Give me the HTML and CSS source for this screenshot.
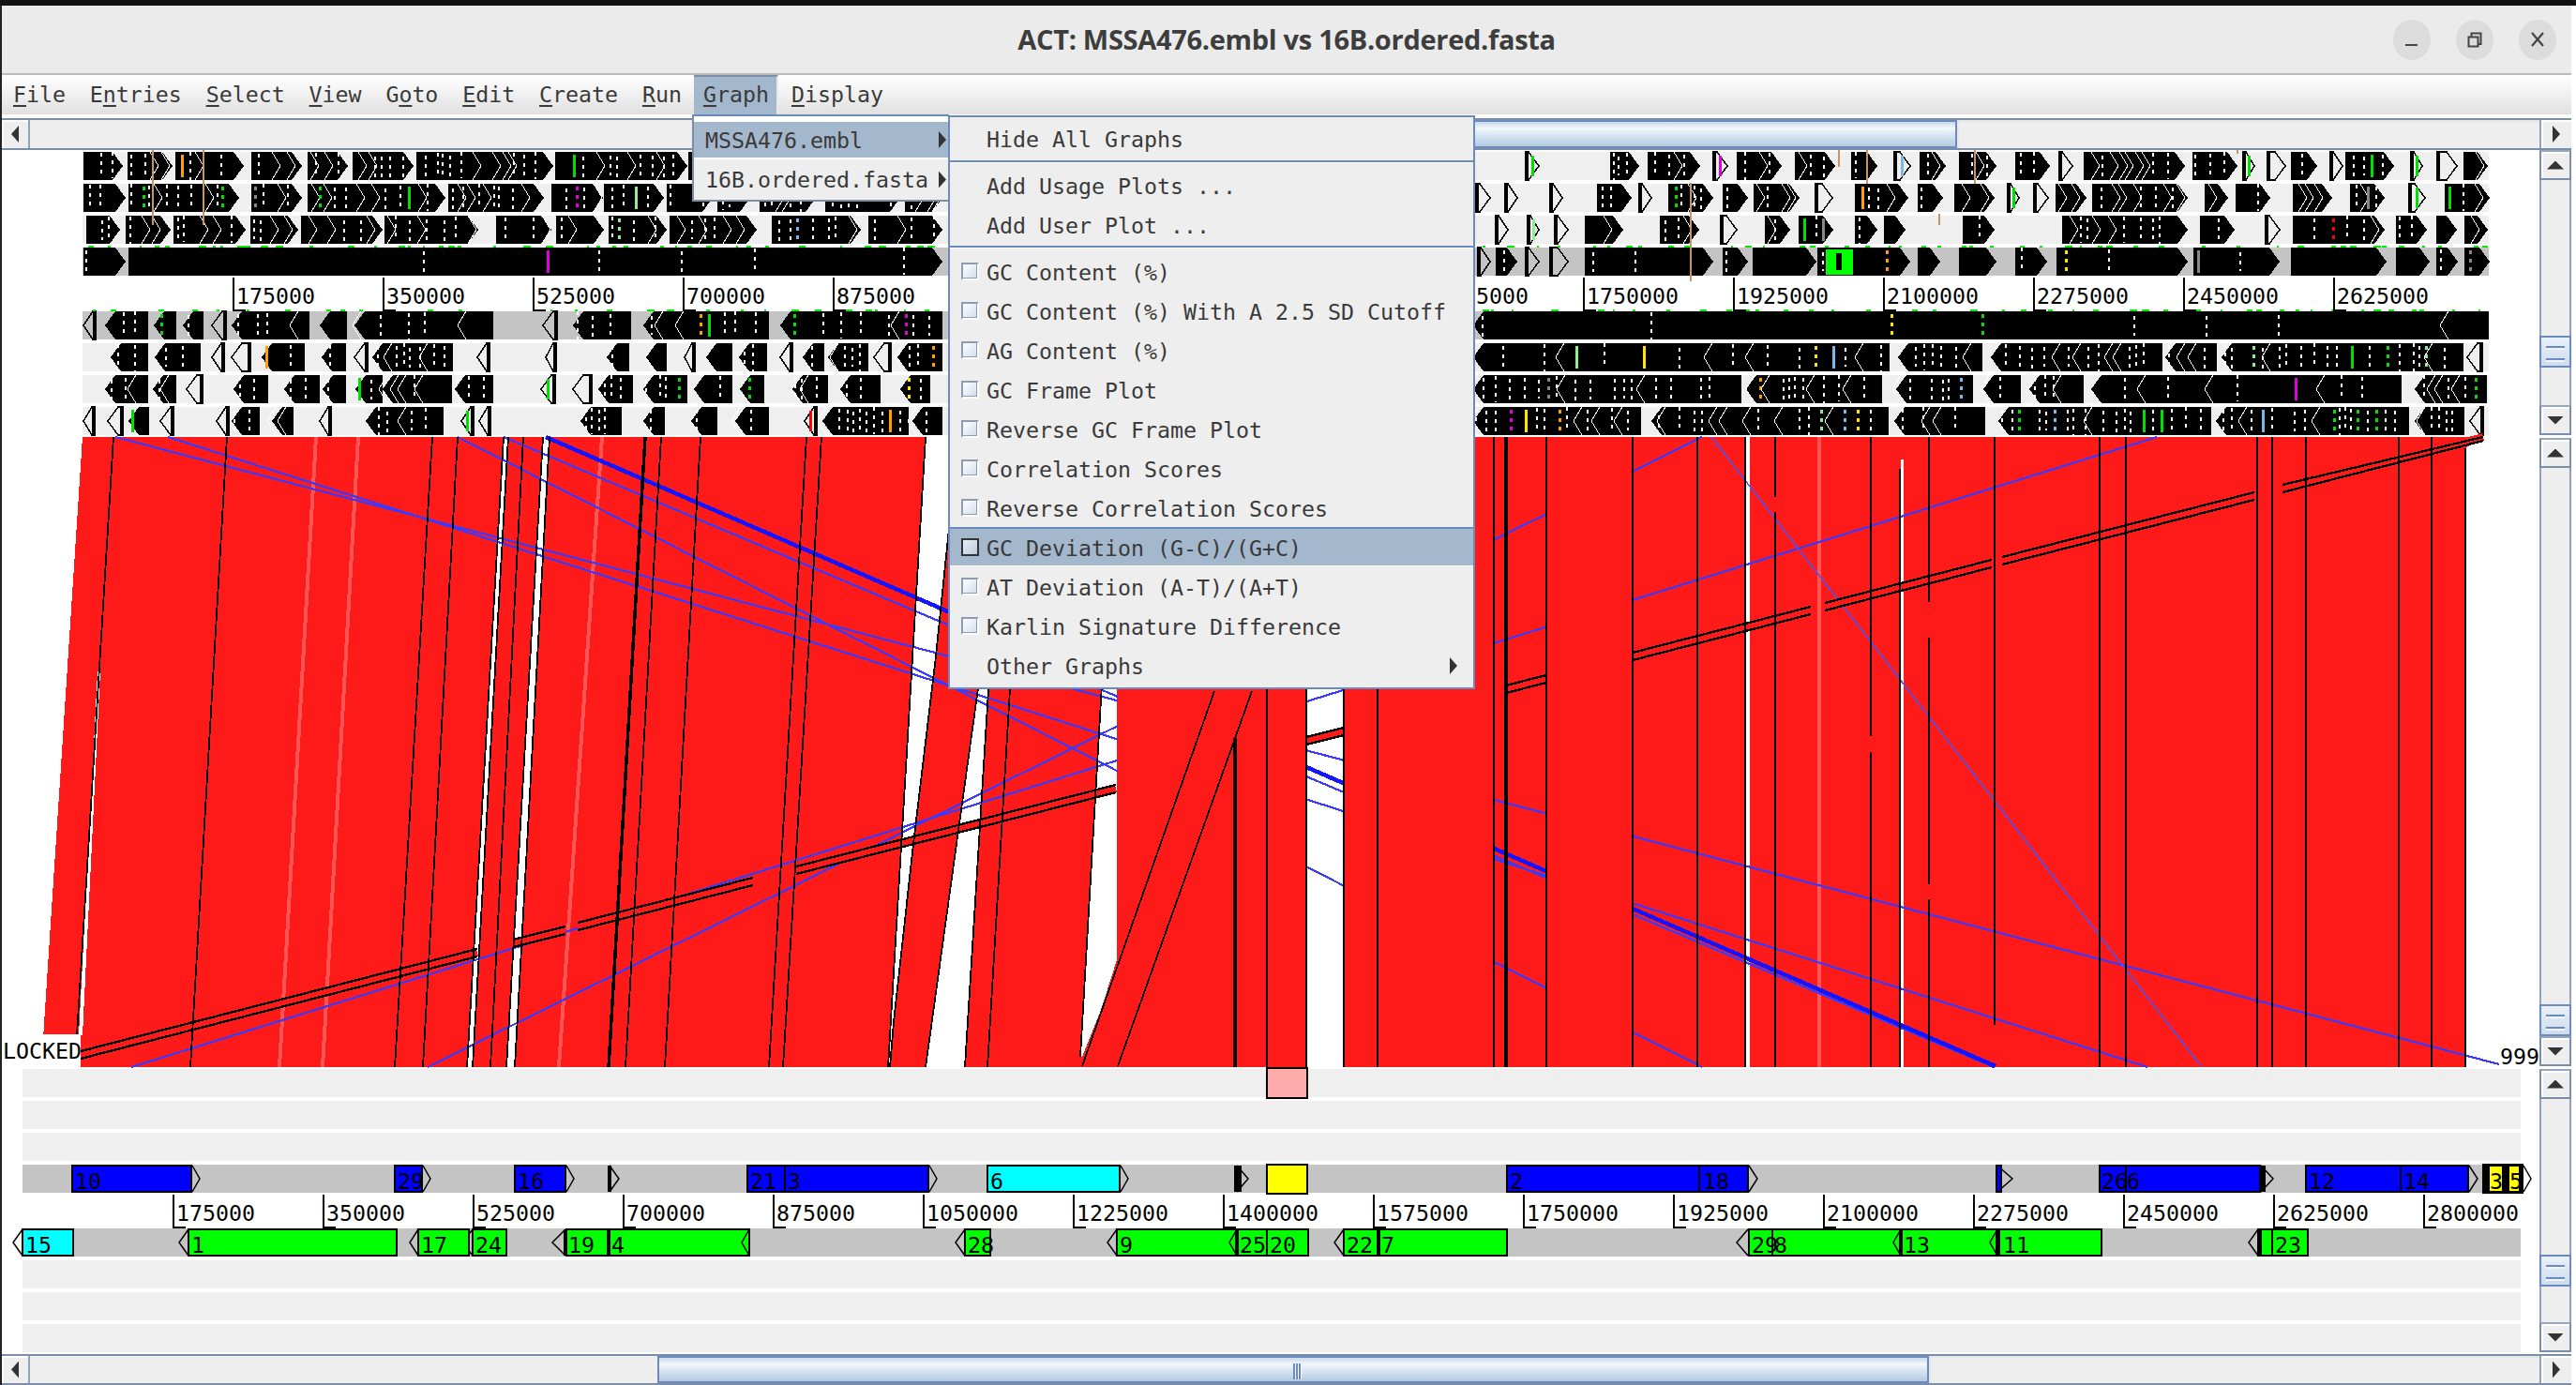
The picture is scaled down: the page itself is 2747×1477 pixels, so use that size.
FILE: index.html
```html
<!DOCTYPE html>
<html lang="en">
<head>
<meta charset="utf-8">
<title>ACT: MSSA476.embl vs 16B.ordered.fasta</title>
<link rel="stylesheet" href="styles.css">
</head>
<body>
<div class="strip"></div>
<div class="win">
  <header class="titlebar">
    <span></span>
    <h1 class="title">ACT: MSSA476.embl vs 16B.ordered.fasta</h1>
    <div class="controls">
      <button class="ctl"><svg viewBox="0 0 20 20" width="20" height="20"><path class="ctl-ink" d="M3 15h13v2H3z"/></svg></button>
      <button class="ctl"><svg viewBox="0 0 20 20" width="20" height="20"><path class="ctl-line" d="M3.500 7.500h10v10h-10zM6.500 7V3.500h10V15H14"/></svg></button>
      <button class="ctl"><svg viewBox="0 0 20 20" width="20" height="20"><path class="ctl-line2" d="M4 3l12 14M16 3L4 17"/></svg></button>
    </div>
  </header>

  <nav class="menubar">
    <span class="mi"><u>F</u>ile</span>
    <span class="mi">E<u>n</u>tries</span>
    <span class="mi"><u>S</u>elect</span>
    <span class="mi"><u>V</u>iew</span>
    <span class="mi">G<u>o</u>to</span>
    <span class="mi"><u>E</u>dit</span>
    <span class="mi"><u>C</u>reate</span>
    <span class="mi"><u>R</u>un</span>
    <span class="mi mi-on"><u>G</u>raph</span>
    <span class="mi"><u>D</u>isplay</span>
  </nav>

  <div class="hscroll hscroll-top">
    <div class="sbtn"><i class="tri tri-l"></i></div>
    <div class="track track-t1"></div>
    <div class="thumb thumb-t"></div>
    <div class="track track-fill"></div>
    <div class="sbtn sbtn-r"><i class="tri tri-r"></i></div>
  </div>

  <div class="content">
    <div class="canvas">
      <svg class="view" width="2706" height="306" viewBox="2 160 2706 306">
        <g class="rows">
          <rect class="row" x="88" y="162" width="2566" height="30"/>
          <rect class="row" x="88" y="196" width="2566" height="30"/>
          <rect class="row" x="88" y="230" width="2566" height="30"/>
          <rect class="row row-d" x="88" y="264" width="2566" height="30"/>
          <rect class="row row-d" x="88" y="332" width="2566" height="30"/>
          <rect class="row" x="88" y="366" width="2566" height="30"/>
          <rect class="row" x="88" y="400" width="2566" height="30"/>
          <rect class="row" x="88" y="434" width="2566" height="30"/>
        </g>
        <g id="genes"></g>
        <path class="tick" d="M249 296V331H262M409 296V331H422M569 296V331H582M729 296V331H742M889 296V331H902M1529 296V331H1542M1689 296V331H1702M1849 296V331H1862M2009 296V331H2022M2169 296V331H2182M2329 296V331H2342M2489 296V331H2502"/>
        <g class="num">
          <text x="252" y="324">175000</text>
          <text x="412" y="324">350000</text>
          <text x="572" y="324">525000</text>
          <text x="732" y="324">700000</text>
          <text x="892" y="324">875000</text>
          <text x="1532" y="324">1575000</text>
          <text x="1692" y="324">1750000</text>
          <text x="1852" y="324">1925000</text>
          <text x="2012" y="324">2100000</text>
          <text x="2172" y="324">2275000</text>
          <text x="2332" y="324">2450000</text>
          <text x="2492" y="324">2625000</text>
        </g>
      </svg>

      <svg class="view view-cmp" width="2706" height="672" viewBox="2 466 2706 672">
        <polygon class="red" points="88,466 2648,466 2629,478 2629,1138 44,1138"/>
        <g class="gap">
          <polygon points="104,716 107,716 88,1104 84,1104"/>
          <polygon points="537,466 542,466 504,1138 498,1138"/>
          <polygon points="579,466 586,466 549,1138 540,1138"/>
          <polygon points="987,466 1022,466 998,700 974,900 953,1090 949,1138 947,1138"/>
          <polygon points="1056,640 1060,640 1029,1138 987,1138"/>
          <polygon points="1190,470 1191,470 1191,1023 1188,1033 1174,1077 1154,1127 1152,1127"/>
          <rect x="1393" y="466" width="40" height="672"/>
          <rect x="1862" y="466" width="4" height="672"/>
          <rect x="2027" y="490" width="3" height="648"/>
        </g>
        <g class="pale">
          <path d="M337 466L298 1138M382 466L344 1138M642 466L596 1138M1940 466V1138"/>
        </g>

        <g class="blue">
          <path d="M123 466L2665 1135M179 466L2290 1138M537 466L2126 1138M488 466L1815 1138"/>
          <path d="M456 1138L1815 466M140 1138L2300 466"/>
        </g>
        <path class="blue-thick" d="M582 466L2128 1137"/>
        <path class="blue-thin" d="M1825 466L2347 1137"/>

        <g class="dbl-red">
          <path d="M86 1125L509 1016M547 1006L603 992M616 988L803 940M849 928L1190 841M1393 790L1433 780M1606 735L1649 724M1741 700L1931 651M1946 647L2124 601M2135 598L2404 529M2434 521L2648 466"/>
        </g>
        <g class="dbl-blk">
          <path d="M86 1129L509 1020M547 1010L603 996M616 992L803 944M849 932L1190 845M1393 794L1433 784M1606 739L1649 728M1741 704L1931 655M1946 651L2124 605M2135 602L2404 533M2434 525L2648 470"/>
          <path d="M86 1121L509 1012M547 1002L603 988M616 984L803 936M849 924L1190 837M1393 786L1433 776M1606 731L1649 720M1741 696L1931 647M1946 643L2124 597M2135 594L2404 525M2434 517L2648 466"/>
        </g>

        <g class="red">
          <rect x="1192" y="466" width="201" height="672"/>
          <rect x="1434" y="466" width="159" height="672"/>
          <rect x="1650" y="466" width="91" height="672"/>
        </g>

        <g class="blk">
          <path d="M121 466L82 1104M242 466L203 1138M461 466L421 1138M488 466L451 1138M537 466L498 1138M542 466L504 1138M558 466L523 1138M579 466L540 1138M586 466L549 1138M705 466L667 1138M747 466L709 1138M860 466L820 1138M876 466L835 1138"/>
          <path d="M987 466L947 1138M1022 466L998 700L974 900L953 1090L949 1138M1056 640L987 1138M1060 640L1029 1138M1093 466L1053 1138M1190 470L1152 1127M1295 737L1154 1137M1335 737L1192 1137"/>
          <path d="M1351 466V1138M1393 466V1138M1433 466V1138M1469 466V1138M1593 466V1138M1649 466V1138M1741 466V1138M1810 466V1138M1861 466V1138M1893 466V530M1893 546V1138M1995 466V785M1995 802V1138M2026 500V1138M2057 466V642M2057 680V943M2057 959V1138M2127 466V1093M2239 466V1138M2267 466V1138M2407 466V1138M2423 466V1138M2459 466V1138M2558 466V1138M2593 466V1138M2629 478V1138"/>
        </g>
        <g class="blk-thick">
          <path d="M688 466L649 1138M1317 787V1138M1606 466V1138"/>
        </g>
        <rect class="gap" x="2" y="1103" width="84" height="35"/>
        <text class="num" x="3" y="1129">LOCKED</text>
        <text class="num" x="2666" y="1135">999</text>
      </svg>

      <svg class="view" width="2706" height="306" viewBox="2 1138 2706 306">
        <g class="rows">
          <rect class="row" x="24" y="1140" width="2664" height="30"/>
          <rect class="row" x="24" y="1174" width="2664" height="30"/>
          <rect class="row" x="24" y="1208" width="2664" height="30"/>
          <rect class="row row-d" x="24" y="1242" width="2664" height="30"/>
          <rect class="row row-d" x="24" y="1310" width="2664" height="30"/>
          <rect class="row" x="24" y="1344" width="2664" height="30"/>
          <rect class="row" x="24" y="1378" width="2664" height="30"/>
          <rect class="row" x="24" y="1412" width="2664" height="30"/>
        </g>
        <rect class="box b-pink" x="1351" y="1139" width="43" height="32"/>

        <path class="chev" d="M205 1243L213 1257L205 1271M451 1243L459 1257L451 1271M604 1243L612 1257L604 1271M650 1243L660 1257L650 1271M991 1243L999 1257L991 1271M1195 1243L1203 1257L1195 1271M1865 1243L1874 1257L1865 1271M2633 1243L2642 1257L2633 1271M2691 1243L2699 1257L2691 1271M2411 1243L2424 1257L2411 1271M1319 1243L1331 1257L1319 1271M2130 1243L2146 1257L2130 1271"/>
        <path class="chev" d="M24 1311L14 1325L24 1339M201 1311L191 1325L201 1339M446 1311L437 1325L446 1339M504 1311L493 1325L504 1339M603 1311L589 1325L603 1339M649 1311L640 1325L649 1339M799 1311L783 1325L799 1339M1029 1311L1019 1325L1029 1339M1191 1311L1181 1325L1191 1339M1319 1311L1307 1325L1319 1339M1351 1311L1343 1325L1351 1339M1433 1311L1423 1325L1433 1339M1470 1311L1462 1325L1470 1339M1864 1311L1852 1325L1864 1339M2027 1311L2014 1325L2027 1339M2132 1311L2122 1325L2132 1339M2408 1311L2398 1325L2408 1339M2423 1311L2413 1325L2423 1339"/>
        <g class="blk-thick">
          <path d="M650 1243V1271M1318 1243V1271M1322 1243V1271M2410 1243V1271M2414 1243V1271M2027 1311V1339M2132 1311V1339"/>
        </g>

        <rect class="box b-blue" x="77" y="1243" width="127" height="28"/>
        <rect class="box b-blue" x="421" y="1243" width="29" height="28"/>
        <rect class="box b-blue" x="549" y="1243" width="54" height="28"/>
        <rect class="box b-blue" x="797" y="1243" width="40" height="28"/>
        <rect class="box b-blue" x="837" y="1243" width="153" height="28"/>
        <rect class="box b-cyan" x="1053" y="1243" width="141" height="28"/>
        <rect class="box b-yellow" x="1351" y="1242" width="43" height="31"/>
        <rect class="box b-blue" x="1607" y="1243" width="205" height="28"/>
        <rect class="box b-blue" x="1812" y="1243" width="52" height="28"/>
        <rect class="box b-blue" x="2129" y="1243" width="5" height="28"/>
        <rect class="box b-blue" x="2239" y="1243" width="28" height="28"/>
        <rect class="box b-blue" x="2267" y="1243" width="143" height="28"/>
        <rect class="box b-blue" x="2459" y="1243" width="101" height="28"/>
        <rect class="box b-blue" x="2560" y="1243" width="72" height="28"/>
        <rect class="box b-black" x="2648" y="1242" width="42" height="30"/>
        <rect class="b-yellow" x="2655" y="1244" width="13" height="26"/>
        <rect class="b-yellow" x="2676" y="1244" width="10" height="26"/>

        <rect class="box b-cyan" x="24" y="1311" width="54" height="28"/>
        <rect class="box b-green" x="201" y="1311" width="222" height="28"/>
        <rect class="box b-green" x="446" y="1311" width="54" height="28"/>
        <rect class="box b-green" x="504" y="1311" width="36" height="28"/>
        <rect class="box b-green" x="604" y="1311" width="45" height="28"/>
        <rect class="box b-green" x="649" y="1311" width="150" height="28"/>
        <rect class="box b-green" x="1029" y="1311" width="27" height="28"/>
        <rect class="box b-green" x="1191" y="1311" width="128" height="28"/>
        <rect class="box b-green" x="1319" y="1311" width="32" height="28"/>
        <rect class="box b-green" x="1351" y="1311" width="44" height="28"/>
        <rect class="box b-green" x="1433" y="1311" width="37" height="28"/>
        <rect class="box b-green" x="1470" y="1311" width="137" height="28"/>
        <rect class="box b-green" x="1865" y="1311" width="25" height="28"/>
        <rect class="box b-green" x="1890" y="1311" width="137" height="28"/>
        <rect class="box b-green" x="2027" y="1311" width="103" height="28"/>
        <rect class="box b-green" x="2132" y="1311" width="109" height="28"/>
        <rect class="box b-green" x="2408" y="1311" width="15" height="28"/>
        <rect class="box b-green" x="2423" y="1311" width="38" height="28"/>
        <g class="blk-thick">
          <path d="M603 1311V1339M649 1311V1339M1319 1311V1339M1470 1311V1339M2027 1311V1339M2130 1311V1339M2410 1311V1339"/>
        </g>
        <path class="chev" d="M799 1311L791 1325L799 1339M1319 1311L1311 1325L1319 1339M2027 1311L2019 1325L2027 1339M2130 1311L2122 1325L2130 1339"/>

        <path class="tick" d="M185 1274V1309H198M345 1274V1309H358M505 1274V1309H518M665 1274V1309H678M825 1274V1309H838M985 1274V1309H998M1145 1274V1309H1158M1305 1274V1309H1318M1465 1274V1309H1478M1625 1274V1309H1638M1785 1274V1309H1798M1945 1274V1309H1958M2105 1274V1309H2118M2265 1274V1309H2278M2425 1274V1309H2438M2585 1274V1309H2598"/>
        <g class="num">
          <text x="188" y="1302">175000</text>
          <text x="348" y="1302">350000</text>
          <text x="508" y="1302">525000</text>
          <text x="668" y="1302">700000</text>
          <text x="828" y="1302">875000</text>
          <text x="988" y="1302">1050000</text>
          <text x="1148" y="1302">1225000</text>
          <text x="1308" y="1302">1400000</text>
          <text x="1468" y="1302">1575000</text>
          <text x="1628" y="1302">1750000</text>
          <text x="1788" y="1302">1925000</text>
          <text x="1948" y="1302">2100000</text>
          <text x="2108" y="1302">2275000</text>
          <text x="2268" y="1302">2450000</text>
          <text x="2428" y="1302">2625000</text>
          <text x="2588" y="1302">2800000</text>
        </g>
        <g class="num">
          <text x="80" y="1268">10</text>
          <text x="424" y="1268">29</text>
          <text x="552" y="1268">16</text>
          <text x="800" y="1268">21</text>
          <text x="840" y="1268">3</text>
          <text x="1056" y="1268">6</text>
          <text x="1610" y="1268">2</text>
          <text x="1816" y="1268">18</text>
          <text x="2241" y="1268">26</text>
          <text x="2268" y="1268">6</text>
          <text x="2462" y="1268">12</text>
          <text x="2563" y="1268">14</text>
          <text x="2655" y="1268">3</text>
          <text x="2676" y="1268">5</text>
          <text x="27" y="1336">15</text>
          <text x="204" y="1336">1</text>
          <text x="449" y="1336">17</text>
          <text x="507" y="1336">24</text>
          <text x="606" y="1336">19</text>
          <text x="652" y="1336">4</text>
          <text x="1032" y="1336">28</text>
          <text x="1194" y="1336">9</text>
          <text x="1322" y="1336">25</text>
          <text x="1354" y="1336">20</text>
          <text x="1436" y="1336">22</text>
          <text x="1473" y="1336">7</text>
          <text x="1868" y="1336">29</text>
          <text x="1892" y="1336">8</text>
          <text x="2030" y="1336">13</text>
          <text x="2136" y="1336">11</text>
          <text x="2426" y="1336">23</text>
        </g>
      </svg>
    </div>

    <div class="vcol">
      <div class="vscroll v-a">
        <div class="vbtn"><i class="tri tri-u"></i></div>
        <div class="track vt1"></div>
        <div class="thumb vthumb"></div>
        <div class="track vt2"></div>
        <div class="vbtn"><i class="tri tri-d"></i></div>
      </div>
      <div class="vscroll v-b">
        <div class="vbtn"><i class="tri tri-u"></i></div>
        <div class="track vt3"></div>
        <div class="thumb vthumb"></div>
        <div class="vbtn"><i class="tri tri-d"></i></div>
      </div>
      <div class="vscroll v-c">
        <div class="vbtn"><i class="tri tri-u"></i></div>
        <div class="track vt4"></div>
        <div class="thumb vthumb"></div>
        <div class="track vt5"></div>
        <div class="vbtn"><i class="tri tri-d"></i></div>
      </div>
    </div>
  </div>

  <div class="hscroll hscroll-bot">
    <div class="sbtn"><i class="tri tri-l"></i></div>
    <div class="track track-b1"></div>
    <div class="thumb thumb-b"></div>
    <div class="track track-fill"></div>
    <div class="sbtn sbtn-r"><i class="tri tri-r"></i></div>
  </div>

  <div class="menu menu-entries">
    <div class="me me-on">MSSA476.embl<i class="tri tri-r tri-m"></i></div>
    <div class="me me-2">16B.ordered.fasta<i class="tri tri-r tri-m"></i></div>
  </div>

  <div class="menu menu-graph">
    <div class="it it-top">Hide All Graphs</div>
    <hr class="sep">
    <div class="it it-u">Add Usage Plots ...</div>
    <div class="it">Add User Plot ...</div>
    <hr class="sep">
    <div class="it it-c"><i class="cb"></i>GC Content (%)</div>
    <div class="it it-c"><i class="cb"></i>GC Content (%) With A 2.5 SD Cutoff</div>
    <div class="it it-c"><i class="cb"></i>AG Content (%)</div>
    <div class="it it-c"><i class="cb"></i>GC Frame Plot</div>
    <div class="it it-c"><i class="cb"></i>Reverse GC Frame Plot</div>
    <div class="it it-c"><i class="cb"></i>Correlation Scores</div>
    <div class="it it-c"><i class="cb"></i>Reverse Correlation Scores</div>
    <div class="it it-c it-on"><i class="cb cb-on"></i>GC Deviation (G-C)/(G+C)</div>
    <div class="it it-c"><i class="cb"></i>AT Deviation (A-T)/(A+T)</div>
    <div class="it it-c"><i class="cb"></i>Karlin Signature Difference</div>
    <div class="it it-c it-sub">Other Graphs<i class="tri tri-r tri-s"></i></div>
  </div>
</div>
<script src="script.js"></script>
</body>
</html>
```
FILE: styles.css
```css
* { box-sizing: border-box; }
html, body { margin: 0; padding: 0; background: #fff; overflow: hidden; width: 2747px; height: 1477px; }
body { font-family: "DejaVu Sans Mono", "Liberation Mono", monospace; font-size: 23.25px; color: #3a3a3a; }

.strip { height: 6px; background: #111; }
.win { position: relative; width: 2742px; border-left: 2px solid #222; background: #fff; height: 1471px; display: flex; flex-direction: column; }

.titlebar { height: 74px; background: #ebebeb; border-bottom: 2px solid #bcbcbc; display: grid; grid-template-columns: 1fr auto 1fr; align-items: center; }
.title { margin: 0 0 1px; font: 700 29px "Open Sans", "Noto Sans", sans-serif; letter-spacing: -0.300px; color: #3d3d3d; }
.controls { display: flex; gap: 27px; justify-content: flex-end; padding-right: 16px; }
.ctl { width: 40px; height: 43px; border: 0; padding: 0; border-radius: 50%; background: #dcdcdc; display: flex; align-items: center; justify-content: center; }
.ctl-ink { fill: #444; }
.ctl-line { fill: none; stroke: #444; stroke-width: 2; }
.ctl-line2 { fill: none; stroke: #444; stroke-width: 2.200; }

.menubar { height: 42px; background: linear-gradient(#fff, #f5f5f5 35%, #e0e0e0); display: flex; padding-left: 2px; line-height: 42px; flex: none; margin-bottom: 4px; }
.mi { padding: 0 10px 0 10px; margin-right: 5.850px; color: #3a3a3a; white-space: pre; }
.mi:nth-child(8) { margin-right: 3px; }
.mi u { text-underline-offset: 3px; }
.mi-on { background: #a3b8cc; border-top: 2px solid #7d8fa8; line-height: 38px; border-right: 2px solid #e8e8e8; padding: 0 10px; margin-right: 4px; width: 90px; }

.hscroll { display: flex; flex: none; height: 34px; background: #eee; border-top: 2px solid #7b8ea8; border-bottom: 2px solid #7b8ea8; box-shadow: inset 0 -2px 0 #fff; }
.hscroll-bot { height: 33px; }
.sbtn { width: 30px; flex: none; display: flex; align-items: center; justify-content: center; border-right: 2px solid #8fa2ba; background: #eee; box-shadow: inset 2px 2px 0 #fff; }
.sbtn-r { width: 34px; border-right: 0; border-left: 2px solid #8fa2ba; }
.track { background: #eee; }
.track-fill { flex: 1; box-shadow: inset 2px 2px 0 #e6e6e6; }
.track-t1 { width: 870px; flex: none; }
.track-b1 { width: 669px; flex: none; }
.thumb { background: linear-gradient(#c9d8ea 0, #f4f8fc 28%, #e3edf6 42%, #b3cae2 100%); border: 2px solid #6b8bc0; flex: none; }
.thumb-t { width: 1185px; }
.thumb-b { width: 1356px; position: relative; }
.thumb-b::after { content: ""; position: absolute; left: 50%; top: 6px; width: 9px; height: 17px; background: repeating-linear-gradient(90deg, #6b8bc0 0 2px, #fff 2px 3px); }

.tri { display: block; background: #333; }
.tri-l { width: 8px; height: 18px; clip-path: polygon(100% 0, 100% 100%, 0 50%); }
.tri-r { width: 8px; height: 18px; clip-path: polygon(0 0, 100% 50%, 0 100%); }
.tri-u { width: 18px; height: 9px; clip-path: polygon(50% 0, 100% 100%, 0 100%); }
.tri-d { width: 18px; height: 9px; clip-path: polygon(0 0, 100% 0, 50% 100%); }

.content { display: flex; flex: 1; min-height: 0; height: 978px; }
.canvas { width: 2706px; flex: none; background: #fff; display: flex; flex-direction: column; }
.view { display: block; flex: none; shape-rendering: crispEdges; }
.view-cmp { overflow: visible; }
.vcol { width: 34px; flex: none; display: flex; flex-direction: column; }
.vscroll { display: flex; flex-direction: column; background: #eee; }
.v-a { height: 304px; margin-bottom: 2px; }
.v-b { height: 670px; margin: 1px 0; }
.v-c { height: 302px; margin: 2px 0; }
.vbtn { height: 32px; flex: none; display: flex; align-items: center; justify-content: center; border: 2px solid #7b8ea8; border-top-color: #98a8bc; background: #eee; box-shadow: inset 2px 2px 0 #fff; }
.vthumb { height: 34px; border: 2px solid #6b8bc0; background: repeating-linear-gradient(transparent 0 9px, #6b8bc0 9px 11px, #f0f4fa 11px 13px) center / 20px 100% no-repeat, linear-gradient(#e9f0f8, #cddcec); }
.vscroll .track { border-left: 2px solid #8fa2ba; border-right: 2px solid #8fa2ba; }
.vt1 { height: 166px; }
.vt2 { height: 40px; }
.vt3 { height: 574px; }
.vt4 { height: 166px; }
.vt5 { height: 38px; }

.row { fill: #efefef; }
.row-d { fill: #c4c4c4; }
.num { font: 23.250px "DejaVu Sans Mono", "Liberation Mono", monospace; fill: #000; }
.tick { fill: none; stroke: #000; stroke-width: 2; }
.red { fill: #ff1a1a; }
.gap { fill: #fff; }
.pale path { fill: none; stroke: #ff5454; stroke-width: 4; }
.blue path { fill: none; stroke: #3a3aff; stroke-width: 2.200; }
.blue-thick { fill: none; stroke: #1414ff; stroke-width: 4.500; }
.blue-thin { fill: none; stroke: #3f55ff; stroke-width: 1.500; }
.dbl-red path { fill: none; stroke: #ff1a1a; stroke-width: 8; }
.dbl-blk path { fill: none; stroke: #000; stroke-width: 2.400; }
.blk path { fill: none; stroke: #000; stroke-width: 1.800; }
.blk-thick path { fill: none; stroke: #000; stroke-width: 3.500; }
.box { stroke: #000; stroke-width: 2.500; }
.b-pink { fill: #ffabab; }
.b-blue { fill: #0000ff; }
.b-cyan { fill: #00ffff; }
.b-yellow { fill: #ffff00; }
.b-green { fill: #00ff00; }
.b-black { fill: #000; }
.chev { fill: none; stroke: #000; stroke-width: 1.500; shape-rendering: auto; }

.gk { fill: #000; }
.go { stroke: #000; stroke-width: 1.500; }
.gw { fill: none; stroke: #fff; stroke-width: 1; }
.gd { fill: none; stroke: #fff; stroke-width: 2; stroke-dasharray: 4 5; }
.gt { fill: #00f000; }
.gb { fill: none; stroke-width: 3; }
.c-green { stroke: #00e000; }
.c-lime { stroke: #90ee90; }
.c-yellow { stroke: #ffe600; }
.c-orange { stroke: #ffa000; }
.c-sky { stroke: #7ab8ea; }
.c-red { stroke: #ff0000; }
.c-mag { stroke: #e000e0; }
.c-gray { stroke: #888; }
.brown { fill: none; stroke: #c59566; stroke-width: 1.500; }
.g1 { fill: #00ff00; }

.menu { position: absolute; background: #eee; z-index: 5; }
.menu-entries { left: 736px; top: 116px; width: 274px; height: 93px; border-top: 2px solid #6b8bc0; border-left: 2px solid #7b8ea8; border-bottom: 2px solid #7b8ea8; background: #fff; }
.me { padding-left: 12px; position: relative; display: flex; align-items: center; color: #3a3a3a; }
.me-on { height: 38px; background: #a3b8cc; margin-top: 6px; }
.me-2 { height: 43px; margin-top: 2px; background: #eee; }
.tri-m { position: absolute; left: 261px; top: 50%; margin-top: -9px; }
.menu-graph { left: 1009px; top: 117px; width: 562px; height: 612px; border: 2px solid #6b8bc0; padding-top: 2px; }
.it { height: 42px; line-height: 42px; padding-left: 39px; white-space: pre; position: relative; color: #3a3a3a; }
.it-top { height: 44px; line-height: 44px; }
.sep { border: 0; margin: 0 0 1px; height: 3px; background: linear-gradient(#6b8bc0 0 2px, #fff 2px); }
.sep + .it { margin-top: 3px; }
.sep + .it-u { margin-top: 4px; }
.it-c { line-height: 46px; }
.cb { position: absolute; left: 12px; top: 12px; width: 19px; height: 19px; border: 2px solid #8d9cb0; border-bottom-color: #fff; border-right-color: #fff; background: linear-gradient(135deg, #fff, #cfdcec); box-shadow: inset -1px -1px 0 #8d9cb0; }
.cb-on { border-color: #333; background: linear-gradient(135deg, #e8eef6, #bccbdc); box-shadow: none; }
.it-on { background: #a3b8cc; box-shadow: inset 0 2px 0 #6b8bc0, inset 0 -1px 0 #fff; }
.tri-s { position: absolute; left: 533px; top: 13px; }
```
FILE: script.js
```js
// Generates the dense gene-feature stripes of the ACT display from span tables.
(function () {
  var seed = 20240611;
  function rnd() { seed = (seed * 1664525 + 1013904223) >>> 0; return seed / 4294967296; }
  function ri(a, b) { return a + Math.floor(rnd() * (b - a + 1)); }

  var ROWS = [
    { y: 162, dir: 1, bg: '#efefef', step: [5, 16], chevron: 0.3, spans: [[89,131],[136,184],[187,260],[268,322],[328,371],[376,441],[444,590],[592,733],[734,1000],[1627,1641],[1717,1748],[1757,1813],[1827,1842],[1852,1900],[1914,1957],[1974,2002],[2020,2037],[2047,2075],[2089,2129],[2149,2186],[2196,2210],[2222,2330],[2338,2386],[2392,2404],[2418,2437],[2443,2471],[2485,2498],[2501,2553],[2571,2583],[2599,2620],[2627,2653]] },
    { y: 196, dir: 1, bg: '#efefef', step: [5, 16], chevron: 0.3, spans: [[89,134],[137,255],[268,322],[328,475],[478,580],[588,643],[644,708],[711,760],[765,800],[810,870],[880,960],[965,1005],[1574,1589],[1605,1618],[1653,1666],[1703,1740],[1748,1761],[1779,1827],[1837,1864],[1870,1919],[1936,1954],[1978,2035],[2045,2072],[2084,2127],[2141,2153],[2169,2184],[2192,2225],[2231,2333],[2351,2376],[2384,2421],[2445,2487],[2506,2543],[2569,2586],[2607,2655]] },
    { y: 230, dir: 1, bg: '#efefef', step: [6, 20], chevron: 0.3, spans: [[92,128],[134,182],[185,262],[267,318],[321,408],[410,510],[529,588],[593,644],[649,711],[714,807],[823,918],[926,1005],[1595,1608],[1629,1641],[1658,1672],[1690,1731],[1770,1812],[1835,1852],[1882,1909],[1918,1955],[1978,2002],[2009,2032],[2093,2127],[2199,2333],[2346,2383],[2416,2431],[2445,2543],[2555,2588],[2598,2620],[2628,2653]] },
    { y: 264, dir: 1, bg: '#c4c4c4', step: [30, 90], chevron: 0, spans: [[89,134],[137,1005],[1576,1589],[1595,1618],[1627,1641],[1653,1672],[1690,1827],[1837,1864],[1869,1937],[1938,2037],[2045,2069],[2089,2129],[2149,2183],[2193,2333],[2339,2431],[2443,2545],[2555,2591],[2598,2621],[2628,2655]] },
    { y: 332, dir: -1, bg: '#c4c4c4', step: [8, 22], chevron: 0.12, wideStep: [70, 180], spans: [[89,102],[112,158],[164,188],[195,217],[226,241],[247,330],[341,370],[378,526],[579,594],[611,673],[686,820],[832,1005],[1571,2654]] },
    { y: 366, dir: -1, bg: '#efefef', step: [6, 16], chevron: 0.2, wideStep: [12, 34], spans: [[118,158],[165,214],[226,239],[247,267],[279,325],[343,369],[378,392],[397,483],[509,522],[582,593],[647,671],[689,711],[730,741],[753,781],[788,818],[832,845],[856,879],[883,926],[932,950],[957,1005],[1571,2015],[2024,2114],[2123,2306],[2309,2364],[2369,2627],[2631,2647]] },
    { y: 400, dir: -1, bg: '#efefef', step: [6, 16], chevron: 0.2, wideStep: [12, 34], spans: [[112,158],[163,188],[199,216],[249,286],[303,341],[344,369],[379,408],[408,482],[485,526],[577,592],[611,631],[638,675],[686,733],[740,781],[789,815],[845,883],[896,939],[960,992],[1571,1857],[1862,2007],[2022,2104],[2115,2155],[2164,2222],[2230,2561],[2575,2652]] },
    { y: 434, dir: -1, bg: '#efefef', step: [6, 16], chevron: 0.2, wideStep: [12, 34], spans: [[89,101],[115,131],[137,159],[171,185],[231,244],[247,277],[290,313],[341,353],[390,473],[492,505],[511,523],[619,663],[686,709],[737,765],[784,820],[858,871],[877,969],[973,1005],[1571,1750],[1761,2014],[2020,2117],[2131,2358],[2363,2569],[2575,2628],[2634,2648]] }
  ];
  var COLORS = ['c-green','c-green','c-green','c-green','c-green','c-lime','c-yellow','c-orange','c-orange','c-sky','c-red','c-mag','c-gray'];
  var H = 30, out = [];

  function poly(x1, x2, y, dir, tip) {
    if (dir > 0) return [x1,y, x2-tip,y, x2,y+H/2, x2-tip,y+H, x1,y+H].join(' ');
    return [x2,y, x1+tip,y, x1,y+H/2, x1+tip,y+H, x2,y+H].join(' ');
  }
  function chevron(x, y, dir) {
    var t = 9 * dir;
    return (x - t) + ' ' + y + ' ' + x + ' ' + (y + H/2) + ' ' + (x - t) + ' ' + (y + H);
  }
  function cluster(x1, x2, r) {
    var y = r.y, d = r.dir, w = x2 - x1;
    if (w < 22) {
      out.push('<polygon class="go" fill="' + r.bg + '" points="' + poly(x1, x2, y, d, Math.min(w - 3, 11)) + '"/>');
      var barX = d > 0 ? x1 : x2 - 3;
      out.push('<rect class="gk" x="' + barX + '" y="' + y + '" width="3" height="' + H + '"/>');
      if (rnd() < 0.25) out.push('<path class="gb ' + COLORS[ri(0, 12)] + '" d="M' + (x1 + w/2 | 0) + ' ' + (y+4) + 'V' + (y+H-4) + '"/>');
      return;
    }
    out.push('<polygon class="gk" points="' + poly(x1, x2, y, d, 11) + '"/>');
    var st = (r.wideStep && w > 300) ? r.wideStep : r.step;
    var p = x1 + ri(3, 10);
    while (p < x2 - 8) {
      var c = rnd();
      if (c < 0.52) {
        out.push('<path class="gd" d="M' + p + ' ' + (y + ri(0,5)) + 'V' + (y + H - ri(0,5)) + '"/>');
      } else if (c < 0.52 + r.chevron) {
        out.push('<polyline class="gw" points="' + chevron(p + (d > 0 ? 8 : -8), y, d) + '"/>');
      } else if (c < 0.95) {
        var dash = rnd() < 0.6 ? ' gd' : '';
        if (rnd() < 0.45) out.push('<path class="gb' + dash + ' ' + COLORS[ri(0, 12)] + '" d="M' + p + ' ' + (y + 3) + 'V' + (y + H - 3) + '"/>');
      }
      p += ri(st[0], st[1]);
    }
  }

  ROWS.forEach(function (r) {
    r.spans.forEach(function (s) { cluster(s[0], s[1], r); });
    if (r.y === 264 || r.y === 332) {
      r.spans.forEach(function (s) {
        for (var x = s[0] + ri(2, 12); x < s[1]; x += ri(8, 44)) {
          out.push('<rect class="gt" x="' + x + '" y="' + (r.y - 2) + '" width="' + ri(2, 8) + '" height="2"/>');
        }
      });
    }
  });

  // the one highlighted gene and a few annotations crossing tracks
  out.push('<rect class="g1" x="1947" y="266" width="29" height="27"/>');
  out.push('<rect class="gk" x="1958" y="270" width="6" height="18"/>');
  [[163,160,240],[217,160,240],[1961,160,178],[1991,160,196],[2106,160,196],[2386,160,164],[1803,195,300],[2068,228,240]].forEach(function (b) {
    out.push('<path class="brown" d="M' + b[0] + ' ' + b[1] + 'V' + b[2] + '"/>');
  });

  document.getElementById('genes').innerHTML = out.join('');
})();
```
